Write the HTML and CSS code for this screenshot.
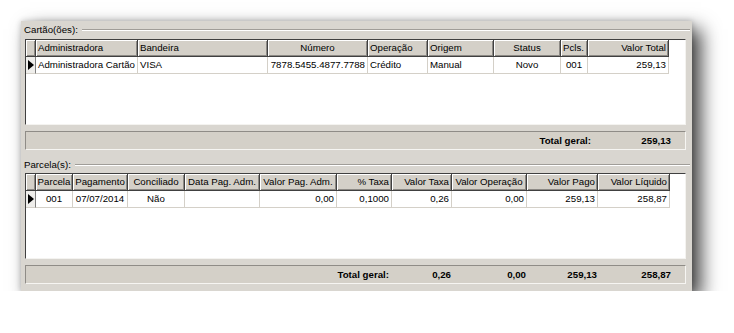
FILE: index.html
```html
<!DOCTYPE html>
<html lang="pt-BR">
<head>
<meta charset="utf-8">
<title>Cartões e Parcelas</title>
<link rel="stylesheet" href="styles.css">
</head>
<body>
<div class="panel">
  <div class="legend legend-first"><span class="legend-text">Cartão(ões):</span><span class="legend-line"></span></div>
  <div class="grid grid-cards">
    <div class="hc ind"></div>
    <div class="hc l">Administradora</div>
    <div class="hc l">Bandeira</div>
    <div class="hc c">Número</div>
    <div class="hc l">Operação</div>
    <div class="hc l">Origem</div>
    <div class="hc c">Status</div>
    <div class="hc l">Pcls.</div>
    <div class="hc r">Valor Total</div>

    <div class="dc ind"><span class="arrow"></span></div>
    <div class="dc l">Administradora Cartão</div>
    <div class="dc l">VISA</div>
    <div class="dc r">7878.5455.4877.7788</div>
    <div class="dc l">Crédito</div>
    <div class="dc l">Manual</div>
    <div class="dc c">Novo</div>
    <div class="dc c">001</div>
    <div class="dc r">259,13</div>
  </div>
  <div class="bar bar-cards">
    <span class="bl"></span>
    <span class="bv">Total geral:</span>
    <span class="bv">259,13</span>
  </div>

  <div class="legend legend-second"><span class="legend-text">Parcela(s):</span><span class="legend-line"></span></div>
  <div class="grid grid-parcels">
    <div class="hc ind"></div>
    <div class="hc c">Parcela</div>
    <div class="hc c">Pagamento</div>
    <div class="hc c">Conciliado</div>
    <div class="hc c">Data Pag. Adm.</div>
    <div class="hc c">Valor Pag. Adm.</div>
    <div class="hc r">% Taxa</div>
    <div class="hc r">Valor Taxa</div>
    <div class="hc c">Valor Operação</div>
    <div class="hc r">Valor Pago</div>
    <div class="hc r">Valor Líquido</div>

    <div class="dc ind"><span class="arrow"></span></div>
    <div class="dc c">001</div>
    <div class="dc c">07/07/2014</div>
    <div class="dc c">Não</div>
    <div class="dc l"></div>
    <div class="dc r">0,00</div>
    <div class="dc r">0,1000</div>
    <div class="dc r">0,26</div>
    <div class="dc r">0,00</div>
    <div class="dc r">259,13</div>
    <div class="dc r">258,87</div>
  </div>
  <div class="bar bar-parcels">
    <span class="bl"></span>
    <span class="bv">Total geral:</span>
    <span class="bv">0,26</span>
    <span class="bv">0,00</span>
    <span class="bv">259,13</span>
    <span class="bv">258,87</span>
  </div>
</div>
</body>
</html>
```
FILE: styles.css
```css
html, body {
  margin: 0;
  padding: 0;
  background: #ffffff;
}
body {
  font-family: "Liberation Sans", Arial, sans-serif;
  font-size: 9.7px;
  color: #000;
}
.panel {
  margin: 21px 0 0 21px;
  width: 671px;
  height: 270px;
  box-sizing: border-box;
  padding: 0 6px 0 4px;
  background: #d9d6d0;
  display: flex;
  flex-direction: column;
  box-shadow: 0 0 6px rgba(0,0,0,0.2), 9px 8px 18px rgba(0,0,0,0.75);
}
.legend {
  display: flex;
  align-items: center;
  margin-left: -1px;
  margin-right: -4px;
}
.legend-first {
  height: 18px;
}
.legend-second {
  height: 17px;
  margin-top: 6px;
}
.legend-text {
  line-height: 12px;
}
.legend-line {
  flex: 1;
  margin-left: 4px;
  height: 0;
  border-top: 1px solid #a09d98;
  border-bottom: 1px solid #ffffff;
}
.grid {
  height: 86px;
  box-sizing: border-box;
  background: #ffffff;
  border-style: solid;
  border-width: 1px;
  border-color: #404040 #f4f3f0 #f4f3f0 #404040;
  display: grid;
  grid-auto-rows: 17px;
  align-content: start;
  justify-content: start;
}
.grid-cards {
  grid-template-columns: 10px 102px 130px 100px 60px 66px 67px 27px 81px;
}
.grid-parcels {
  grid-template-columns: 10px 37px 55px 57px 75px 77px 55px 60px 75px 71px 72px;
}
.hc, .dc {
  box-sizing: border-box;
  white-space: nowrap;
  overflow: hidden;
  line-height: 16px;
  padding: 0 2px;
}
.hc {
  background: #d4d0c8;
  border-right: 1px solid #404040;
  border-bottom: 1px solid #404040;
  box-shadow: inset 1px 1px 0 #ffffff, inset -1px -1px 0 #8c8984;
}
.dc {
  background: #ffffff;
  border-right: 1px solid #d4d0c8;
  border-bottom: 1px solid #d4d0c8;
}
.dc.ind {
  background: #efeeeb;
  border-right: 1px solid #808080;
  position: relative;
  padding: 0;
}
.arrow {
  position: absolute;
  left: 2px;
  top: 3px;
  width: 0;
  height: 0;
  border-top: 5px solid transparent;
  border-bottom: 5px solid transparent;
  border-left: 6px solid #000;
}
.l { text-align: left; }
.c { text-align: center; }
.r { text-align: right; padding-right: 2px; }
.hc.c, .dc.c { padding: 0 1px; }
.bar {
  height: 19px;
  margin-top: 6px;
  box-sizing: border-box;
  background: #d4d0c8;
  border-style: solid;
  border-width: 1px;
  border-color: #8f8c87 #f6f5f2 #f6f5f2 #8f8c87;
  display: grid;
  align-items: center;
  font-weight: bold;
  line-height: 12px;
}
.bv {
  text-align: right;
  white-space: nowrap;
}
.bar-cards {
  grid-template-columns: 510px 55px 80px;
}
.bar-parcels {
  grid-template-columns: 250px 113px 62px 75px 71px 74px;
}
```
